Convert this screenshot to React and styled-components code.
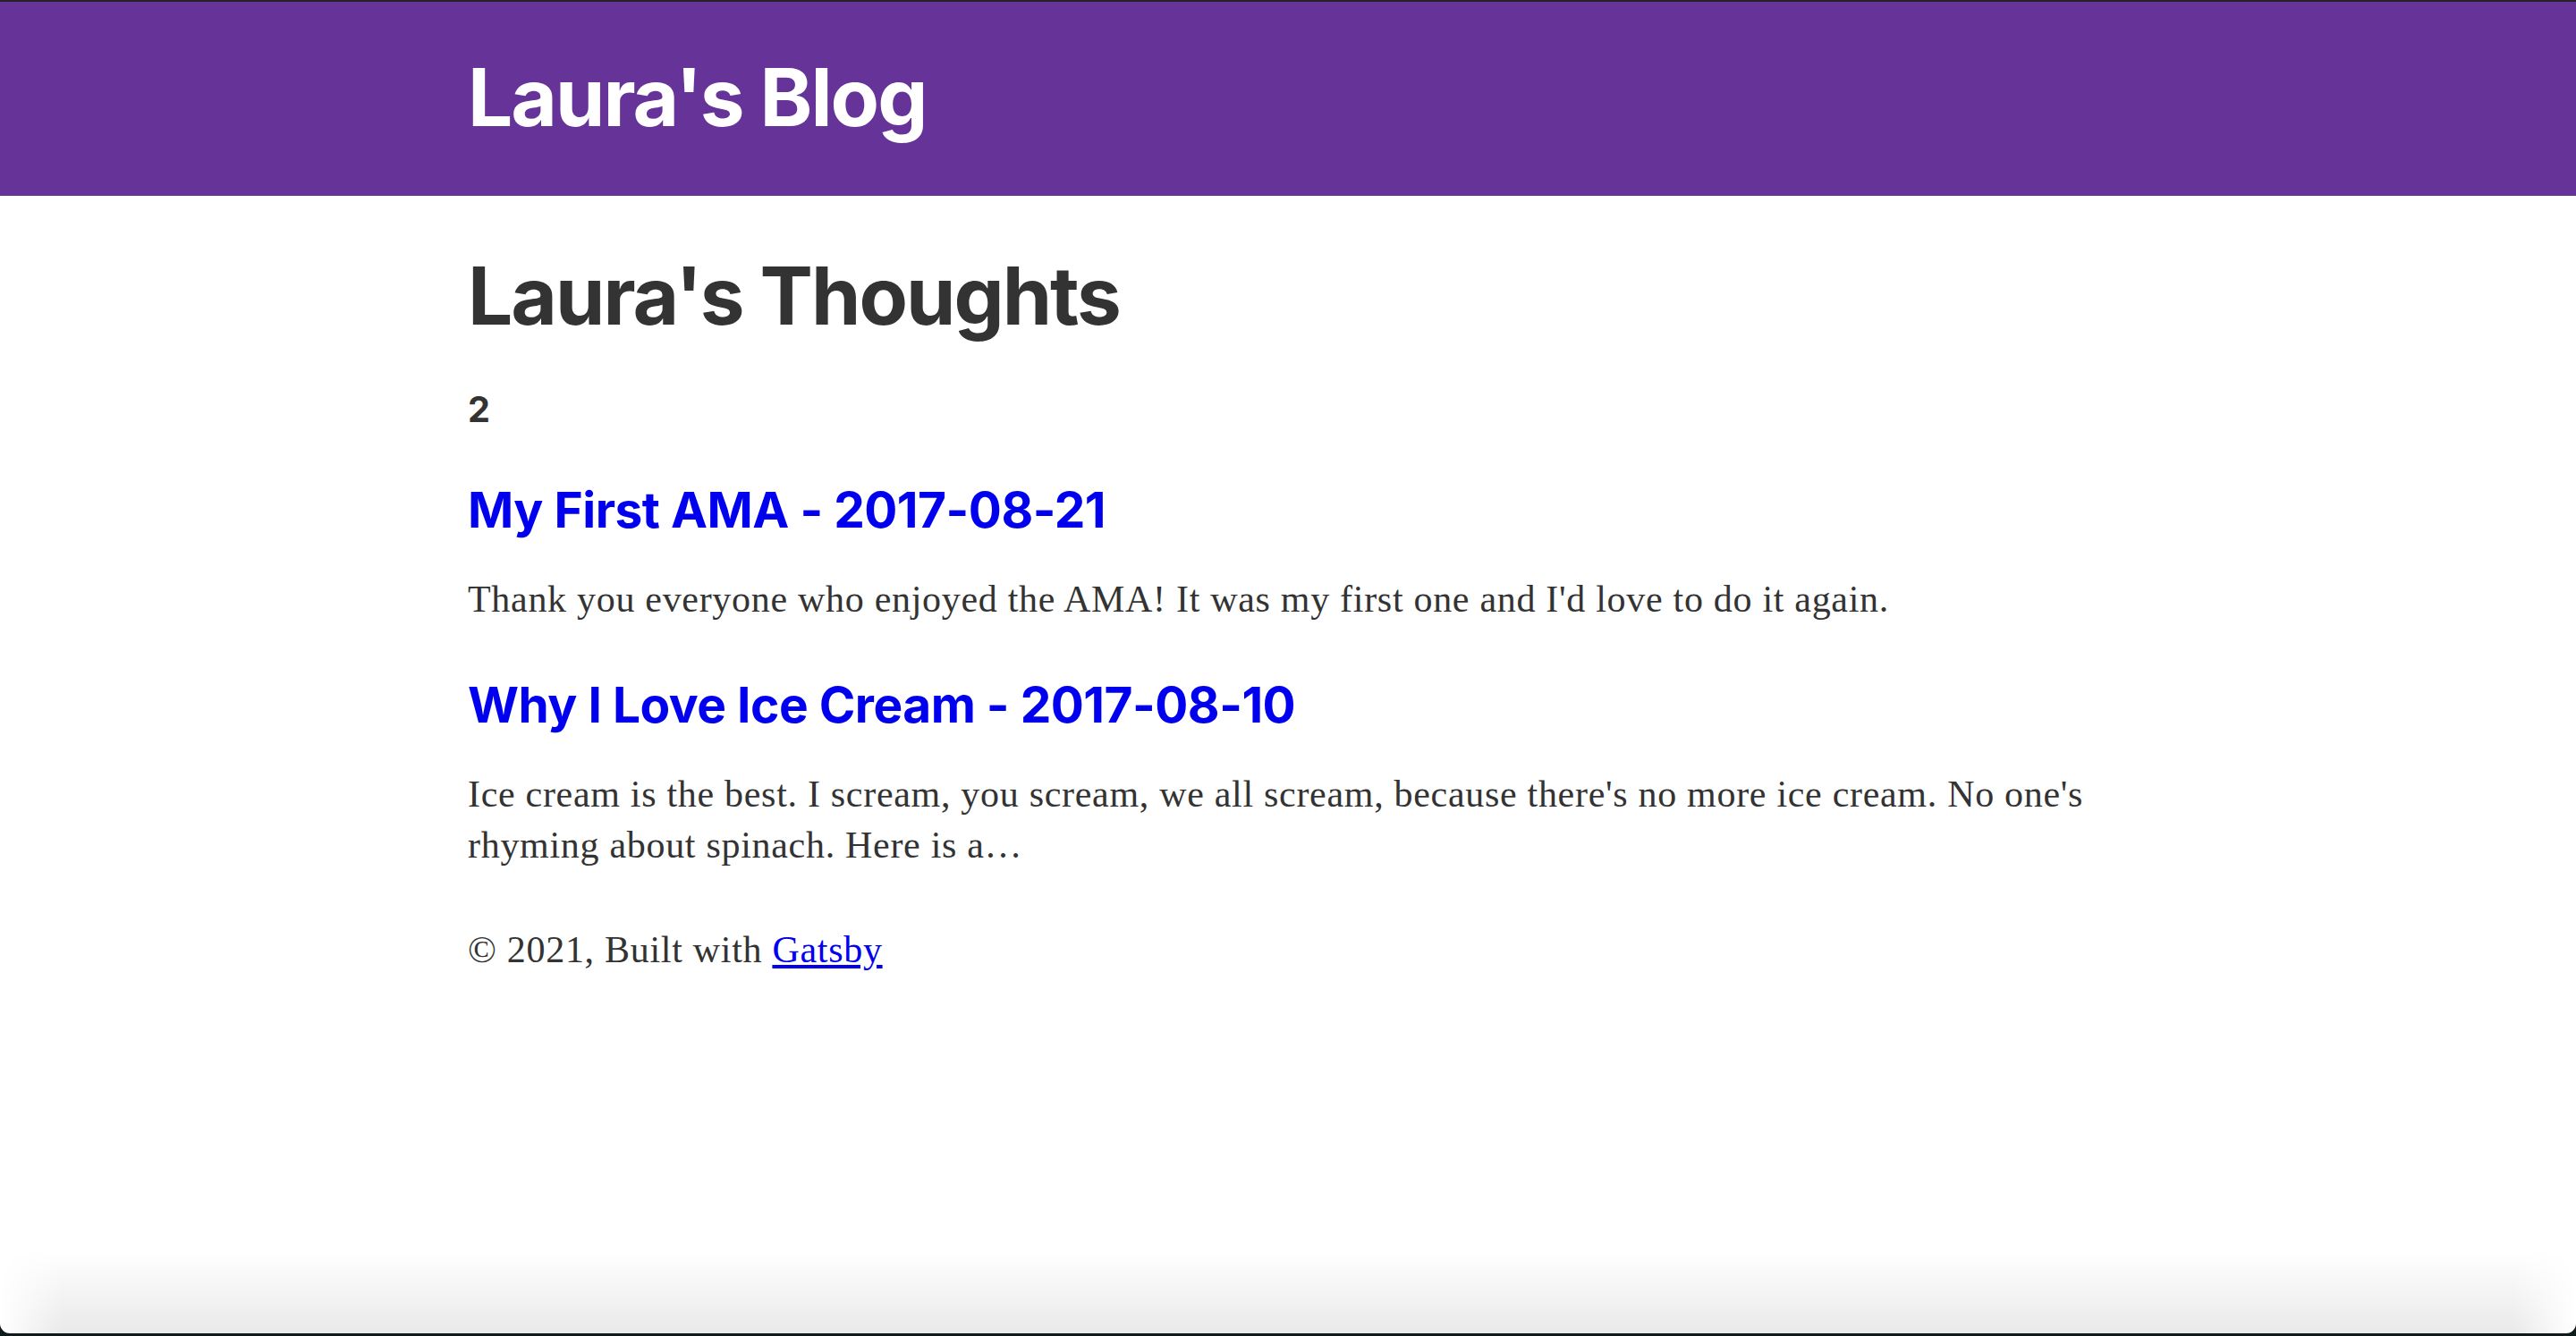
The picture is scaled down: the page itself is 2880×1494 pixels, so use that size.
import React from 'react';
import styled, { createGlobalStyle } from 'styled-components';

const GlobalStyle = createGlobalStyle`
    html, body {
        margin: 0;
        padding: 0;
        background: #0d1b1c;
    }
    body {
        font-family: 'Liberation Serif', Georgia, serif;
        color: #333;
    }
`;

const Screen = styled.div`
    height: 1494px;
    display: flex;
    flex-direction: column;
    padding-bottom: 3px;
    box-sizing: border-box;
`;

const Window = styled.div`
    flex: 1;
    display: flex;
    flex-direction: column;
    background: white;
    border-top: 2px solid #242424;
    border-radius: 0 0 11px 11px;
    overflow: hidden;
`;

const Header = styled.header`
    background: #663399;
    margin-bottom: 63px;
`;

const Container = styled.div`
    max-width: 1920px;
    margin: 0 auto;
    padding: ${({ pad }) => pad || '0 43px'};
    box-sizing: border-box;
    width: 100%;
`;

const SiteTitle = styled.h1`
    margin: 0;
    font-family: Inter, 'Noto Sans', sans-serif;
    font-size: 89px;
    font-weight: 700;
    line-height: 1.1;
    letter-spacing: -2px;

    a {
        color: white;
        text-decoration: none;
    }
`;

const PageTitle = styled.h1`
    margin: 0 0 57px;
    font-family: Inter, 'Noto Sans', sans-serif;
    font-size: 89px;
    font-weight: 700;
    line-height: 1.1;
    letter-spacing: -2px;
    color: #333;
`;

const Count = styled.h4`
    margin: 0 0 60px;
    font-family: Inter, 'Noto Sans', sans-serif;
    font-size: 39.6px;
    font-weight: 700;
    line-height: 1.1;
    color: #333;
`;

const PostLink = styled.a`
    color: #0000ee;
    text-decoration: none;
`;

const PostTitle = styled.h3`
    margin: 0 0 41px;
    font-family: Inter, 'Noto Sans', sans-serif;
    font-size: 55px;
    font-weight: 700;
    line-height: 1.1;
    letter-spacing: -0.5px;
`;

const Excerpt = styled.p`
    margin: 0 0 59px;
    font-size: 42px;
    letter-spacing: 0.7px;
    line-height: 57.4px;
    color: #333;
`;

const Footer = styled.footer`
    font-size: 42px;
    letter-spacing: 0.7px;
    line-height: 57.4px;
    color: #333;

    a {
        color: #0000ee;
        text-decoration: underline;
    }
`;

const BottomShade = styled.div`
    margin-top: auto;
    height: 92px;
    background: linear-gradient(to bottom, rgba(0, 0, 0, 0), rgba(0, 0, 0, 0.085));
    -webkit-mask-image: linear-gradient(to right, transparent, black 70px, black calc(100% - 70px), transparent);
    mask-image: linear-gradient(to right, transparent, black 70px, black calc(100% - 70px), transparent);
`;

const posts = [
    {
        title: 'My First AMA',
        date: '2017-08-21',
        excerpt: "Thank you everyone who enjoyed the AMA! It was my first one and I'd love to do it again.",
    },
    {
        title: 'Why I Love Ice Cream',
        date: '2017-08-10',
        excerpt: "Ice cream is the best. I scream, you scream, we all scream, because there's no more ice cream. No one's rhyming about spinach. Here is a…",
    },
];

function App() {
    return (
        <Screen>
            <GlobalStyle />
            <Window>
                <Header>
                    <Container pad="58px 43px 61px">
                        <SiteTitle>
                            <a href="#">Laura's Blog</a>
                        </SiteTitle>
                    </Container>
                </Header>
                <Container>
                    <PageTitle>Laura's Thoughts</PageTitle>
                    <Count>{posts.length}</Count>
                    {posts.map(post => (
                        <div key={post.date}>
                            <PostLink href="#">
                                <PostTitle>{post.title} - {post.date}</PostTitle>
                            </PostLink>
                            <Excerpt>{post.excerpt}</Excerpt>
                        </div>
                    ))}
                    <Footer>
                        © 2021, Built with <a href="#">Gatsby</a>
                    </Footer>
                </Container>
                <BottomShade />
            </Window>
        </Screen>
    );
}

export default App;
